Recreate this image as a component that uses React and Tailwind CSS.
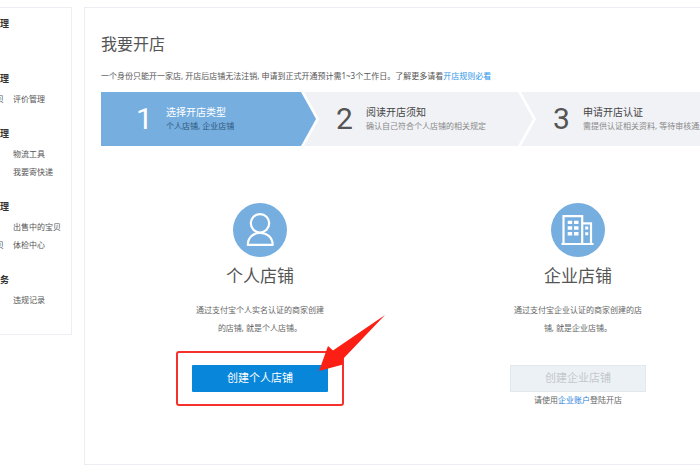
import { useState } from "react";

const menu = [
  { title: "理", rows: [["", ""]] },
  { title: "理", rows: [["贝", "评价管理"]] },
  { title: "理", rows: [["", "物流工具"], ["", "我要寄快递"]] },
  { title: "理", rows: [["", "出售中的宝贝"], ["贝", "体检中心"]] },
  { title: "务", rows: [["", "违规记录"]] },
];

function Sidebar() {
  return (
    <nav className="w-[72px] shrink-0 overflow-hidden border border-l-0 border-[#eceef3] pt-[7px] pb-[25px] text-[8px] text-[#555]">
      {menu.map((group, i) => (
        <div key={i} className={i > 0 ? "mt-[17px]" : ""}>
          <h2 className="mb-[2px] text-[9px] leading-[18px] font-bold text-[#333]">{group.title}</h2>
          {group.rows.map(([left, right], j) => (
            <div key={j} className="flex h-[18px] items-center gap-[9px] whitespace-nowrap">
              <span className="flex w-1 justify-end">
                {left && <a href="#">{left}</a>}
              </span>
              {right && <a href="#">{right}</a>}
            </div>
          ))}
        </div>
      ))}
    </nav>
  );
}

function Step({ number, title, text, className, titleClass, textClass }) {
  return (
    <li className={`flex h-[54px] shrink-0 items-center whitespace-nowrap ${className}`}>
      <span className="w-[30px] font-[Roboto,sans-serif] text-[30px] leading-[54px]">{number}</span>
      <div>
        <div className={`text-[10px] leading-[14px] ${titleClass}`}>{title}</div>
        <div className={`text-[8px] leading-[14px] ${textClass}`}>{text}</div>
      </div>
    </li>
  );
}

function PersonIcon() {
  return (
    <svg viewBox="0 0 54 54" className="size-[54px]" aria-hidden="true">
      <circle cx="27" cy="27" r="27" fill="#75aedf" />
      <g fill="none" stroke="#fff" strokeWidth="2.2" strokeLinejoin="round">
        <circle cx="27" cy="20.3" r="9.2" />
        <path d="M14.800 41.900C14.900 34.500 19.800 30 27 30S39.600 34.500 39.700 41.900Z" />
      </g>
    </svg>
  );
}

function CompanyIcon() {
  return (
    <svg viewBox="0 0 54 54" className="size-[54px]" aria-hidden="true">
      <circle cx="27" cy="27" r="27" fill="#75aedf" />
      <g fill="none" stroke="#fff" strokeWidth="2.2">
        <path d="M12.500 41V13.200H31.200V41M31.200 20.300H40V41M10.500 41H42.500" />
      </g>
      <g fill="#fff">
        <path d="M16.700 17.700h4.500v3.400h-4.500zM23 17.700h4.500v3.400h-4.500zM16.700 23.300h4.500v3.400h-4.500zM23 23.300h4.500v3.400h-4.500zM16.700 29h4.500v3.400h-4.500zM23 29h4.500v3.400h-4.500z" />
        <path d="M34.200 23.500h3v3h-3zM34.200 29.200h3v3h-3z" />
      </g>
    </svg>
  );
}

function ShopType({ icon, title, lines, children }) {
  return (
    <section className="flex w-[318px] flex-col items-center text-[8px] text-[#666]">
      {icon}
      <h2 className="mt-[7px] text-[17px] leading-6 text-[#555]">{title}</h2>
      <p className="mt-[13px] text-center leading-[18px]">
        {lines[0]}
        <br />
        {lines[1]}
      </p>
      {children}
    </section>
  );
}

export default function App() {
  const [created, setCreated] = useState(false);

  return (
    <div className="flex items-start gap-3 overflow-hidden bg-white pt-[7px] pb-[6px] font-['Noto_Sans','Noto_Sans_CJK_SC',sans-serif]">
      <Sidebar />
      <main className="min-w-[680px] flex-1 border border-[#eceef3] px-4 pb-[57px]">
        <h1 className="mt-6 text-[16px] leading-6 text-[#555]">我要开店</h1>
        <p className="mt-[13px] text-[8px] leading-[14px] whitespace-nowrap text-[#555]">
          一个身份只能开一家店, 开店后店铺无法注销, 申请到正式开通预计需1~3个工作日。了解更多请看
          <a href="#" className="text-[#2b95e9]">开店规则必看</a>
        </p>

        <ol className="mt-[9px] flex">
          <Step
            number="1"
            title="选择开店类型"
            text="个人店铺, 企业店铺"
            className="w-[215px] bg-[#75aedf] pl-[35px] text-white [clip-path:polygon(0_0,200px_0,100%_50%,200px_100%,0_100%)]"
            titleClass="text-white"
            textClass="text-[#31597d]"
          />
          <Step
            number="2"
            title="阅读开店须知"
            text="确认自己符合个人店铺的相关规定"
            className="-ml-3 w-[229px] bg-[#f1f2f6] pl-8 text-[#555] [clip-path:polygon(0_0,214px_0,100%_50%,214px_100%,0_100%,15px_50%)]"
            titleClass="text-[#444]"
            textClass="text-[#888]"
          />
          <Step
            number="3"
            title="申请开店认证"
            text="需提供认证相关资料, 等待审核通过"
            className="-ml-3 w-[229px] bg-[#f1f2f6] pl-8 text-[#555] [clip-path:polygon(0_0,100%_0,100%_100%,0_100%,15px_50%)]"
            titleClass="text-[#444]"
            textClass="text-[#888]"
          />
        </ol>

        <div className="mt-[57px] flex">
          <ShopType
            icon={<PersonIcon />}
            title="个人店铺"
            lines={["通过支付宝个人实名认证的商家创建", "的店铺, 就是个人店铺。"]}
          >
            <div className="relative mt-[28px]">
              <button
                type="button"
                onClick={() => setCreated(!created)}
                className="block h-[27px] w-[136px] rounded-[1px] bg-[#0786da] text-[11px] text-white"
              >
                创建个人店铺
              </button>
              <div className="pointer-events-none absolute -inset-x-4 -inset-y-[14px] rounded-[3px] border-2 border-[#f5302d]" />
              <svg
                viewBox="0 0 66 58"
                className="pointer-events-none absolute -top-[50px] left-[127px] h-[58px] w-[66px]"
                aria-hidden="true"
              >
                <path d="M66 0L14 35.500L9 31L0 56L24 49.500L23.500 44.500Z" fill="#fb1f14" />
              </svg>
            </div>
          </ShopType>

          <ShopType
            icon={<CompanyIcon />}
            title="企业店铺"
            lines={["通过支付宝企业认证的商家创建的店", "铺, 就是企业店铺。"]}
          >
            <button
              type="button"
              disabled
              className="mt-[28px] block h-[27px] w-[136px] border border-[#e2e8ec] bg-[#ecf1f5] text-[11px] text-[#c3c8cc]"
            >
              创建企业店铺
            </button>
            <p className="mt-px leading-[14px]">
              请使用<a href="#" className="text-[#2b80d9]">企业账户</a>登陆开店
            </p>
          </ShopType>
        </div>
      </main>
    </div>
  );
}
